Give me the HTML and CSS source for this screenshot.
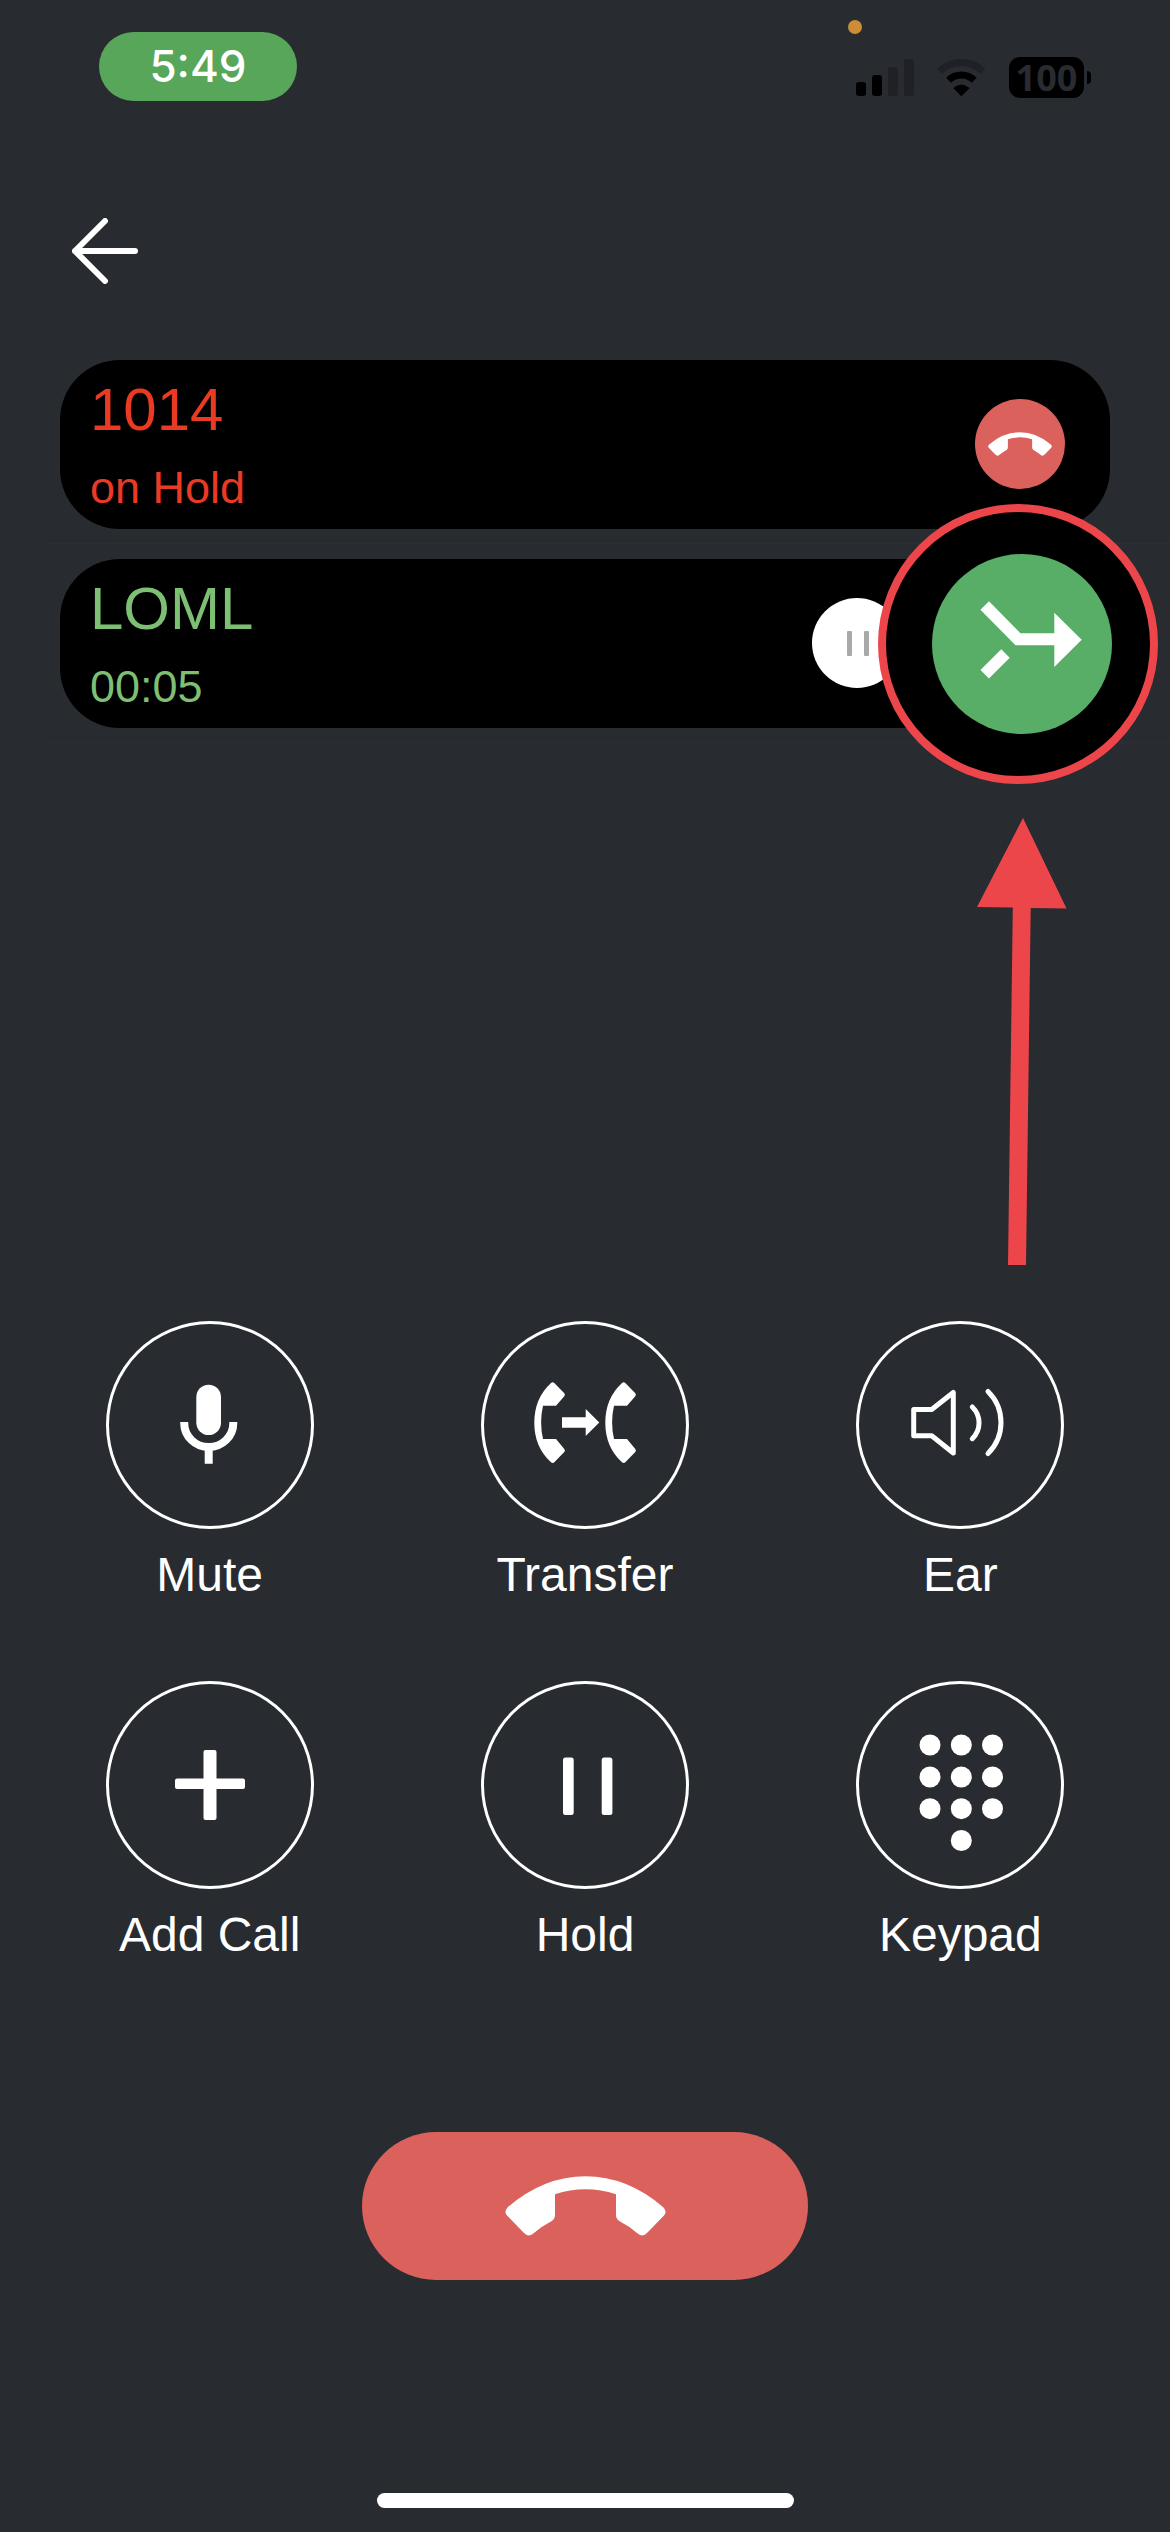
FILE: index.html
```html
<!DOCTYPE html>
<html lang="en">
<head>
<meta charset="utf-8">
<meta name="viewport" content="width=device-width, initial-scale=1">
<title>Active calls</title>
<link rel="stylesheet" href="styles.css">
</head>
<body>
<svg class="sprite" aria-hidden="true">
  <symbol id="hangup" viewBox="142 44 161 60">
    <path d="M145 75Q181 44.3 222.5 44.3T300 75Q305 79.5 300.5 84L284.5 100.5Q279.5 106 274 101Q266 94 257 89.5Q253 87 253 83V62.3Q238 57.3 222.5 57.3T192 62.3V83Q192 87 188 89.5Q179 94 171 101Q165.5 106 160.5 100.5L144.5 84Q140 79.5 145 75Z"/>
  </symbol>
</svg>

<header class="status">
  <time class="clock">5:49</time>
  <span class="mic-dot"></span>
  <div class="indicators">
    <svg class="signal" viewBox="0 0 58 37" aria-label="Signal">
      <rect y="23" width="10" height="14" rx="3"/>
      <rect x="16" y="16" width="10" height="21" rx="3"/>
      <rect class="dim" x="32" y="8" width="10" height="29" rx="3"/>
      <rect class="dim" x="48" width="10" height="37" rx="3"/>
    </svg>
    <svg class="wifi" viewBox="0 0 49 38" aria-label="Wi-Fi">
      <path class="arc dim-arc" d="M2.8 12.4a30.5 30.5 0 0 1 43.2 0"/>
      <path class="arc" d="M11.6 21.3a18 18 0 0 1 25.6 0"/>
      <path d="M24.4 37.3L16.2 29Q24.4 21.8 32.6 29Z"/>
    </svg>
    <div class="battery"><span class="level">100</span><span class="cap"></span></div>
  </div>
</header>

<main class="screen">
  <nav class="top">
    <button class="back" aria-label="Back">
      <svg viewBox="0 0 66 66"><path d="M33 3L3 33L33 63M3 33H63"/></svg>
    </button>
  </nav>

  <ul class="calls">
    <li class="call">
      <div class="card held">
        <div class="who">
          <span class="name">1014</span>
          <span class="state">on Hold</span>
        </div>
        <button class="round red" aria-label="End call with 1014"><svg class="hang-small"><use href="#hangup"/></svg></button>
      </div>
    </li>
    <li class="call">
      <div class="card active">
        <div class="who">
          <span class="name">LOML</span>
          <span class="state">00:05</span>
        </div>
        <button class="round white" aria-label="Hold LOML">
          <svg viewBox="0 0 90 90"><rect x="35" y="33" width="5" height="25" rx="1"/><rect x="52" y="33" width="5" height="25" rx="1"/></svg>
        </button>
        <div class="lens">
          <button class="merge" aria-label="Merge calls">
            <svg viewBox="0 0 180 180">
              <path class="line" d="M52.7 51.5L86 85.3H124M73.5 99.5L52.7 120.3"/>
              <path class="head" d="M122.3 58.7L149.7 85.7L122.3 113Z"/>
            </svg>
          </button>
        </div>
        <svg class="pointer" viewBox="0 0 90 447" aria-hidden="true">
          <path d="M46 0L89.500 90.500L53.700 90L49 447H31L35.800 89.500L0 89Z"/>
        </svg>
      </div>
    </li>
  </ul>

  <div class="actions">
    <button class="action">
      <span class="ring"><svg viewBox="0 0 208 208">
        <rect x="90.300" y="63.700" width="24.700" height="50.300" rx="12.300"/>
        <path class="mic" d="M78.200 101V102A24.500 24 0 0 0 127.300 102V101M102.700 126V142.700"/>
      </svg></span>
      <span class="label">Mute</span>
    </button>
    <button class="action">
      <span class="ring"><svg viewBox="0 0 208 208">
        <path id="handset" d="M70 62Q71.700 60.500 73.300 62L83.300 72.200Q84.500 73.700 83.300 75.200L75 84.700H62Q58.200 101.300 62 118H75L83.300 128Q84.500 129.500 83.300 131L73.300 141.300Q71.700 142.800 70 141.300Q53.300 126 53.300 101.700T70 62Z"/>
        <use href="#handset" x="71"/>
        <path d="M81 96.300H104.700V88L118.300 101.500L104.700 115V106.700H81Z"/>
      </svg></span>
      <span class="label">Transfer</span>
    </button>
    <button class="action">
      <span class="ring"><svg viewBox="0 0 208 208">
        <path class="sound" d="M57.700 88.500H75.700L97.300 71.500V132L75.700 114.700H57.700ZM116.300 86A22 22 0 0 1 116.300 117.700M132 70.500A43.500 43.500 0 0 1 132 132.500"/>
      </svg></span>
      <span class="label">Ear</span>
    </button>
    <button class="action">
      <span class="ring"><svg viewBox="0 0 208 208">
        <rect x="69" y="97.500" width="70" height="10.500" rx="2"/>
        <rect x="97.500" y="69" width="13" height="70" rx="2"/>
      </svg></span>
      <span class="label">Add Call</span>
    </button>
    <button class="action">
      <span class="ring"><svg viewBox="0 0 208 208">
        <rect x="82" y="76.500" width="10.700" height="57.500" rx="2.500"/>
        <rect x="120.700" y="76.500" width="10.700" height="57.500" rx="2.500"/>
      </svg></span>
      <span class="label">Hold</span>
    </button>
    <button class="action">
      <span class="ring"><svg viewBox="0 0 208 208">
        <circle cx="74" cy="64" r="10.500"/><circle cx="105.300" cy="64" r="10.500"/><circle cx="136.500" cy="64" r="10.500"/>
        <circle cx="74" cy="96" r="10.500"/><circle cx="105.300" cy="96" r="10.500"/><circle cx="136.500" cy="96" r="10.500"/>
        <circle cx="74" cy="127.700" r="10.500"/><circle cx="105.300" cy="127.700" r="10.500"/><circle cx="136.500" cy="127.700" r="10.500"/>
        <circle cx="105.300" cy="159.500" r="10.500"/>
      </svg></span>
      <span class="label">Keypad</span>
    </button>
  </div>

  <button class="end" aria-label="End call"><svg class="hang-large"><use href="#hangup"/></svg></button>
</main>

<div class="home-bar"></div>
</body>
</html>
```
FILE: styles.css
```css
:root {
  --bg: #282b30;
  --red: #db615d;
  --mark: #ec464b;
  --dim: #202126;
}

* { box-sizing: border-box; }

body {
  margin: 0;
  min-height: 100vh;
  display: flex;
  flex-direction: column;
  background: var(--bg);
  color: #fff;
  font-family: "Liberation Sans", Arial, sans-serif;
}

button {
  padding: 0;
  border: 0;
  background: none;
  color: inherit;
  font: inherit;
  cursor: pointer;
}

svg { display: block; fill: currentColor; }

.sprite { position: absolute; width: 0; height: 0; }

/* Status bar */
.status {
  position: relative;
  display: flex;
  justify-content: space-between;
  align-items: flex-start;
  padding: 32px 79px 0 99px;
  font-family: Inter, sans-serif;
}

.clock {
  width: 198px;
  border-radius: 35px;
  background: #57a65a;
  font-size: 44px;
  font-weight: 500;
  line-height: 69px;
  text-align: center;
}

.mic-dot {
  position: absolute;
  top: 20px;
  right: 308px;
  width: 14px;
  height: 14px;
  border-radius: 50%;
  background: #cc8d35;
}

.indicators {
  display: flex;
  align-items: center;
  gap: 23px;
  padding-top: 25px;
  color: #000;
}

.signal { width: 58px; height: 37px; }
.wifi { width: 49px; height: 38px; }
.dim { fill: var(--dim); }
.arc { fill: none; stroke: #000; stroke-width: 7; }
.dim-arc { stroke: var(--dim); }

.battery { display: flex; align-items: center; gap: 3px; }

.level {
  width: 75px;
  border-radius: 11px;
  background: #000;
  color: var(--bg);
  font-family: "Noto Sans", sans-serif;
  font-size: 36px;
  font-weight: 700;
  line-height: 41px;
  text-align: center;
}

.cap { width: 4px; height: 13px; border-radius: 0 6px 6px 0; background: #000; }

/* Screen */
.screen { display: flex; flex-direction: column; }

.top { padding: 117px 72px 76px; }
.back { display: block; }
.back svg {
  width: 66px;
  height: 66px;
  fill: none;
  stroke: #fff;
  stroke-width: 6;
  stroke-linecap: round;
  stroke-linejoin: round;
}

/* Calls */
.calls { margin: 0; padding: 0; list-style: none; }

.call::after {
  content: "";
  display: block;
  height: 1px;
  margin: 14px 0 15px 48px;
  background: #2d2f34;
}

.card {
  position: relative;
  display: flex;
  align-items: center;
  gap: 73px;
  margin: 0 60px;
  padding: 14px 45px 15px 30px;
  border-radius: 60px;
  background: #000;
}

.active { padding-right: 208px; }
.held { color: #ea3a24; }
.active { color: #7dbf73; }

.who { flex: 1; display: flex; flex-direction: column; gap: 16px; }
.name { font-size: 60px; line-height: 72px; }
.state { font-size: 45px; line-height: 52px; }

.round {
  display: flex;
  align-items: center;
  justify-content: center;
  width: 90px;
  height: 90px;
  border-radius: 50%;
}

.red { background: var(--red); color: #fff; }
.white { background: #fff; color: #a9a9a9; }
.hang-small { width: 64px; height: 24px; }

/* Enlarged merge button and the arrow that points to it */
.lens {
  position: absolute;
  top: -55px;
  right: -48px;
  display: flex;
  align-items: center;
  justify-content: center;
  width: 280px;
  height: 280px;
  padding-left: 8px;
  border: 8px solid var(--mark);
  border-radius: 50%;
  background: #000;
}

.merge { width: 180px; height: 180px; border-radius: 50%; background: #58ad67; color: #fff; }
.line { fill: none; stroke: #fff; stroke-width: 12; }

.pointer {
  position: absolute;
  top: 259px;
  right: 43px;
  width: 90px;
  height: 447px;
  color: var(--mark);
}

/* Call actions */
.actions {
  display: grid;
  grid-template-columns: repeat(3, 1fr);
  row-gap: 78px;
  margin-top: 563px;
  padding: 0 22px;
}

.action { display: flex; flex-direction: column; align-items: center; gap: 18px; }

.ring {
  display: grid;
  width: 208px;
  height: 208px;
  border-radius: 50%;
  box-shadow: inset 0 0 0 3px #fff;
}

.label { font-size: 48px; line-height: 56px; }
.mic { fill: none; stroke: #fff; stroke-width: 8; }
.sound {
  fill: none;
  stroke: #fff;
  stroke-width: 5;
  stroke-linecap: round;
  stroke-linejoin: round;
}

.end {
  display: flex;
  align-items: center;
  justify-content: center;
  align-self: center;
  width: 446px;
  height: 148px;
  margin-top: 169px;
  border-radius: 74px;
  background: var(--red);
}

.hang-large { width: 161px; height: 60px; }

.home-bar {
  align-self: center;
  width: 417px;
  height: 15px;
  margin: auto 0 24px;
  border-radius: 8px;
  background: #fff;
}
```
